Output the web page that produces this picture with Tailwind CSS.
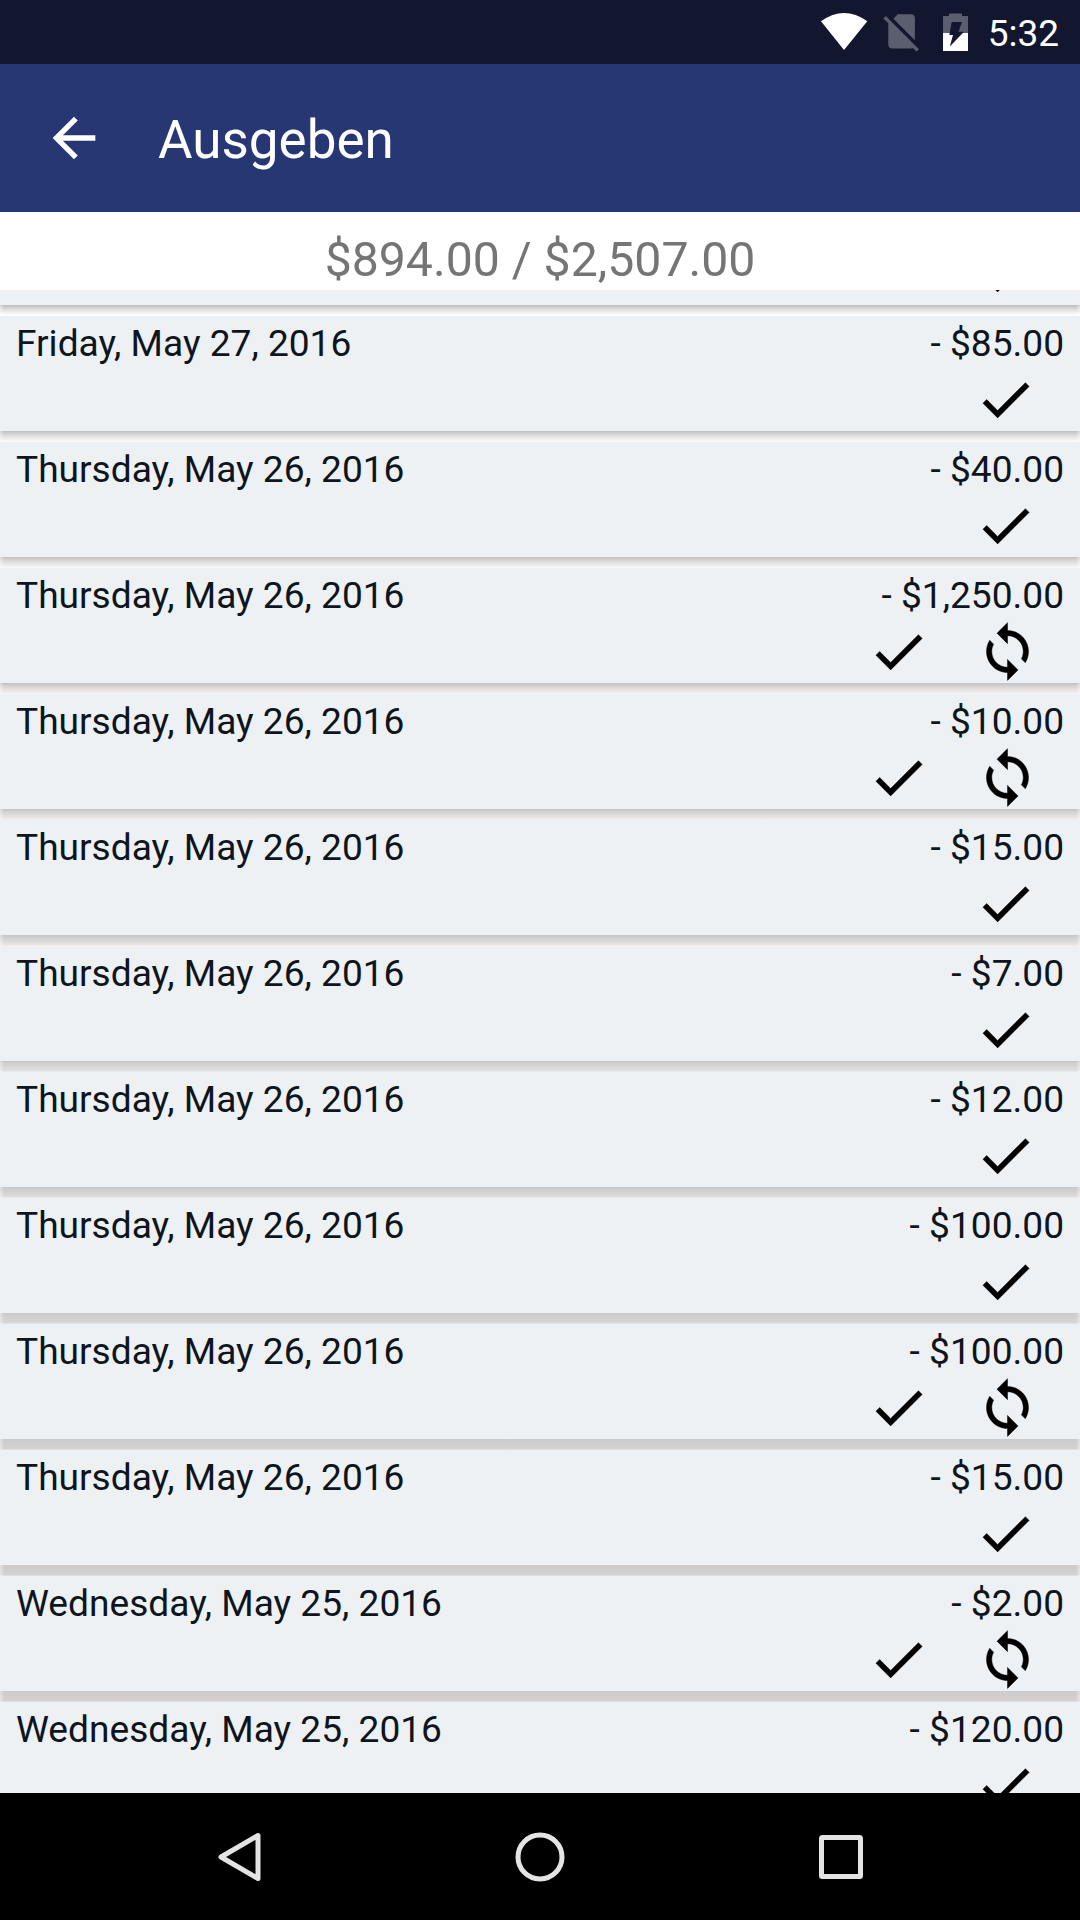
<!DOCTYPE html>
<html lang="de">
<head>
<meta charset="utf-8">
<title>Ausgeben</title>
<script src="https://cdn.jsdelivr.net/npm/@tailwindcss/browser@4"></script>
</head>
<body class="w-[1080px] h-[1920px] overflow-hidden bg-white font-['Roboto',sans-serif] flex flex-col">
<svg class="hidden">
  <symbol id="check" viewBox="0 0 24 24"><path d="M9 16.17L4.83 12l-1.42 1.41L9 19 21 7l-1.41-1.41z"/></symbol>
  <symbol id="sync" viewBox="0 0 24 24"><path d="M12 4V1L8 5l4 4V6c3.31 0 6 2.69 6 6 0 1.01-.25 1.97-.7 2.8l1.46 1.46C19.54 15.03 20 13.57 20 12c0-4.42-3.58-8-8-8zm0 14c-3.31 0-6-2.69-6-6 0-1.01.25-1.97.7-2.8L5.24 7.74C4.46 8.97 4 10.43 4 12c0 4.42 3.58 8 8 8v3l4-4-4-4v3z"/></symbol>
</svg>
<div class="h-16 shrink-0 bg-[#12172f] flex items-center justify-end pr-[21px] text-white">
  <svg class="w-[160px] h-16 mr-[8px]" viewBox="0 0 160 64">
    <path d="M1 21.3Q24 4.700 47.300 21.300L24 50z" fill="#fff"/>
    <path transform="translate(58.8 8.6) scale(1.9)" d="M18.99 5c0-1.1-.89-2-1.99-2h-7L7.66 5.34 19 16.68 18.99 5zM3.65 3.88L2.38 5.15 5 7.77V19c0 1.1.9 2 2 2h10.01c.35 0 .67-.1.96-.26l1.88 1.88 1.27-1.27L3.65 3.88z" fill="#5a5e6e"/>
    <path d="M123 16h6v-2.500h13V16h6v17h-25z" fill="#5a5e6e"/>
    <path d="M123 33h25v18h-25z" fill="#fff"/>
    <path d="M131.700 22H142l-3.500 9.700h5.500L129.800 46.500 133 35h-3.700z" fill="#12172f"/>
  </svg>
  <span class="pt-[3px] text-[37px] leading-none">5:32</span>
</div>
<div class="h-[148px] shrink-0 bg-[#263773] flex items-center pl-[42px] text-white">
  <svg class="w-16 h-16" viewBox="0 0 24 24" fill="#fff"><path d="M20 11H7.830l5.590-5.590L12 4l-8 8 8 8 1.410-1.410L7.830 13H20v-2z"/></svg>
  <h1 class="ml-[52px] pt-[5px] text-[53px] leading-none">Ausgeben</h1>
</div>
<div class="h-[78px] shrink-0 pt-[18px] text-center text-[48.2px] leading-[60px] text-[#757575]">$894.00 / $2,507.00</div>
<main class="h-[1503px] shrink-0 overflow-hidden bg-white"><div id="list" class="-mt-[100px]"></div></main>
<nav class="flex-1 bg-black">
  <svg class="w-full h-[127px]" viewBox="0 0 1080 127" fill="none" stroke="#e4e4e4" stroke-width="5" stroke-linejoin="round">
    <path d="M221 64L258 42.500V85.500z"/>
    <circle cx="540" cy="64" r="22"/>
    <rect x="821.500" y="44.500" width="39" height="39" rx="1"/>
  </svg>
</nav>
<script>
const rows = [
  ['', '', 0],
  ['Friday, May 27, 2016', '85.00', 0],
  ['Thursday, May 26, 2016', '40.00', 0],
  ['Thursday, May 26, 2016', '1,250.00', 1],
  ['Thursday, May 26, 2016', '10.00', 1],
  ['Thursday, May 26, 2016', '15.00', 0],
  ['Thursday, May 26, 2016', '7.00', 0],
  ['Thursday, May 26, 2016', '12.00', 0],
  ['Thursday, May 26, 2016', '100.00', 0],
  ['Thursday, May 26, 2016', '100.00', 1],
  ['Thursday, May 26, 2016', '15.00', 0],
  ['Wednesday, May 25, 2016', '2.00', 1],
  ['Wednesday, May 25, 2016', '120.00', 0]
];
// Card shadows get longer toward the bottom of the list.
const gap = i => {
  const t = Math.min(i / 9, 1);
  const grey = (a, b) => { const v = Math.round(a + (b - a) * t); return `rgb(${v},${v},${v})`; };
  return `<div class="h-[11px]" style="background:linear-gradient(90deg,rgba(255,255,255,.45),transparent 4px,transparent calc(100% - 4px),rgba(255,255,255,.45)),linear-gradient(${grey(190, 203)},${grey(226, 207)} 45%,${grey(250, 209)} 85%,${grey(255, 230)})"></div>`;
};
const icon = (name) => `<svg class="w-[63px] h-[63px] stroke-[#000000]/60 stroke-[0.3]"><use href="#${name}"/></svg>`;
document.getElementById('list').innerHTML = rows.map(([d, a, s], i) => `<div class="h-[115px] bg-[#edf1f4] px-4 text-[#0e151c]">
    <div class="h-[51.5px] flex justify-between text-[37.12px] leading-[55px]"><span>${d}</span><span>${a ? '- $' + a : ''}</span></div>
    <div class="flex justify-end gap-[46px] ${s ? 'pr-[25px]' : 'pr-[27px]'}">${icon('check')}${s ? icon('sync') : ''}</div>
  </div>${gap(i)}`).join('');
</script>
</body>
</html>
